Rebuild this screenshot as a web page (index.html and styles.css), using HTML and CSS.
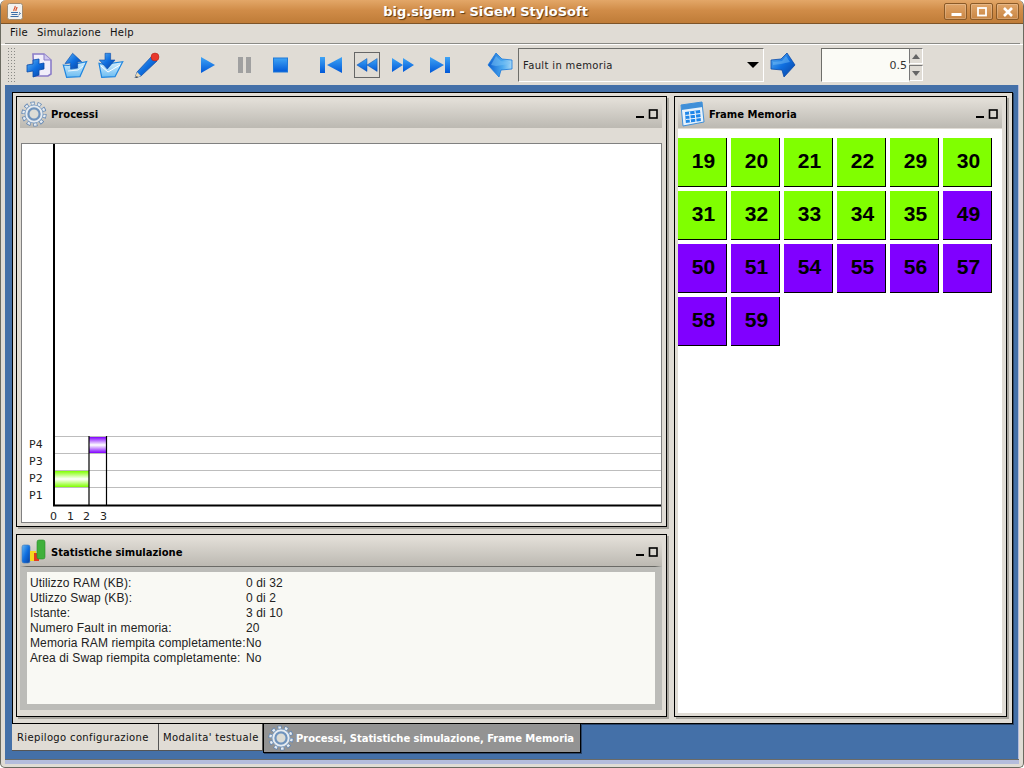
FILE: index.html
```html
<!DOCTYPE html>
<html>
<head>
  <title>big.sigem - SiGeM StyloSoft</title>
  <link rel="stylesheet" href="styles.css">
</head>
<body>
  <!-- shared gradients and icons -->
  <svg class="defs" width="0" height="0">
    <defs>
      <linearGradient id="blu" x1="0" y1="0" x2="0" y2="1">
        <stop offset="0" stop-color="#3fa4f5"/>
        <stop offset="1" stop-color="#0058d8"/>
      </linearGradient>
      <linearGradient id="bluDark" x1="0" y1="0" x2="1" y2="1">
        <stop offset="0" stop-color="#67b7f0"/>
        <stop offset="0.5" stop-color="#0f6fe0"/>
        <stop offset="1" stop-color="#0a3f9c"/>
      </linearGradient>
      <linearGradient id="bluBack" x1="0" y1="0" x2="1" y2="0">
        <stop offset="0" stop-color="#0d5fd0"/>
        <stop offset="0.6" stop-color="#4aa8ee"/>
        <stop offset="1" stop-color="#a8d8f6"/>
      </linearGradient>
      <linearGradient id="bluPale" x1="0" y1="0" x2="0" y2="1">
        <stop offset="0" stop-color="#d6effc"/>
        <stop offset="1" stop-color="#6bbcf2"/>
      </linearGradient>
      <linearGradient id="greenBar" x1="0" y1="0" x2="0" y2="1">
        <stop offset="0" stop-color="#80ff00"/>
        <stop offset="0.5" stop-color="#ffffff"/>
        <stop offset="1" stop-color="#80ff00"/>
      </linearGradient>
      <linearGradient id="purpleBar" x1="0" y1="0" x2="0" y2="1">
        <stop offset="0" stop-color="#8000ff"/>
        <stop offset="0.5" stop-color="#ffffff"/>
        <stop offset="1" stop-color="#8000ff"/>
      </linearGradient>
      <symbol id="gear" viewBox="0 0 26 26">
        <circle cx="13" cy="13" r="10.6" fill="none" stroke="#6488b4" stroke-width="4" stroke-dasharray="3.6 2.4" pathLength="60"/>
        <circle cx="13" cy="13" r="10.6" fill="none" stroke="#e6ebf0" stroke-width="2.4" stroke-dasharray="2.4 3.6" stroke-dashoffset="-0.6" pathLength="60"/>
        <circle cx="13" cy="13" r="9" fill="#e6ebf0" stroke="#7f9fc4" stroke-width="0.8"/>
        <circle cx="13" cy="13" r="5.6" fill="#dcdcd6" stroke="#6f93bd" stroke-width="2.2"/>
      </symbol>
      <symbol id="winMin" viewBox="0 0 24 10">
        <rect x="2" y="7" width="8" height="2" fill="#000"/>
        <rect x="15.500" y="1" width="7.500" height="8" fill="#d8d5ce" stroke="#000" stroke-width="1.600"/>
      </symbol>
    </defs>
  </svg>

  <div class="window">
    <div class="titlebar">
      <svg class="java-icon" width="16" height="17" viewBox="0 0 16 17">
        <rect x="0.5" y="0.5" width="15" height="16" rx="2" fill="#f2f2f0" stroke="#a08a70"/>
        <path d="M8 3c1 2-2 3-1 5M10 4c0 2-1.500 2-1 4" fill="none" stroke="#d8502a" stroke-width="1.200"/>
        <path d="M4 9.500h7M4.500 11.500h6M3.500 13.500h8M12 9.500l1.500 1-2 1.500" fill="none" stroke="#3c6ea8" stroke-width="1"/>
      </svg>
      <div class="title-text">big.sigem - SiGeM StyloSoft</div>
      <div class="win-buttons">
        <div class="win-btn">
          <svg width="14" height="12" viewBox="0 0 14 12"><rect x="2.500" y="7" width="10" height="3" fill="#fff"/></svg>
        </div>
        <div class="win-btn">
          <svg width="14" height="12" viewBox="0 0 14 12"><rect x="3" y="2" width="8" height="7.500" fill="none" stroke="#fff" stroke-width="1.800"/></svg>
        </div>
        <div class="win-btn">
          <svg width="14" height="12" viewBox="0 0 14 12"><path d="M3 2l8 8M11 2l-8 8" stroke="#fff" stroke-width="2.600"/></svg>
        </div>
      </div>
    </div>

    <div class="menubar">
      <span class="menu-item">File</span>
      <span class="menu-item">Simulazione</span>
      <span class="menu-item">Help</span>
    </div>

    <div class="toolbar">
      <div class="gripper"></div>

      <div class="tool-group first-group">
        <svg class="tool" viewBox="0 0 26 26">
          <path d="M7 2h11l7 6v14l-3 2H8z" fill="#f1eefa" stroke="#8a7cc8" stroke-width="1.600"/>
          <path d="M18 2v6h7" fill="#cfc8ee" stroke="#8a7cc8"/>
          <path d="M7 8l6-1v5l5-1v6l-5 1v5l-6 2v-6l-6 1v-7l6-1z" fill="url(#bluDark)" stroke="#0a4aa8" stroke-width="0.800"/>
        </svg>
        <svg class="tool" viewBox="0 0 26 26">
          <path d="M1.300 13l5 .5 18.300-3.900-6.600 15L4.600 25.300z" fill="url(#bluPale)" stroke="#1f86e0" stroke-width="1.200"/>
          <path d="M10.600 1.300l9 8.300-4 .5v6l-7 1v-6l-5.600.5z" fill="url(#bluDark)" stroke="#0a4aa8" stroke-width="0.600"/>
          <path d="M6 19l10-1 5-4" fill="none" stroke="#fff" stroke-width="0.800"/>
        </svg>
        <svg class="tool" viewBox="0 0 26 26">
          <path d="M1 11.300l5 1 18.700-2.600-7.700 15-13.300.6z" fill="url(#bluPale)" stroke="#1f86e0" stroke-width="1.200"/>
          <path d="M3 14l7 6 12-7" fill="none" stroke="#fff"/>
          <path d="M7 1.300h5.600V8H17l-7.700 9-8-9H7z" fill="url(#bluDark)" stroke="#0a4aa8" stroke-width="0.600"/>
        </svg>
        <svg class="tool" viewBox="0 0 26 26">
          <path d="M18 4l5 5L7 24l-6 2 2-6z" fill="url(#bluDark)" stroke="#0a4aa8" stroke-width="0.700"/>
          <path d="M3 20l4 4-6 2z" fill="#ecd9b4"/>
          <path d="M1 26l2-2 .8 1.200z" fill="#222"/>
          <circle cx="21" cy="5" r="4" fill="#e8382c" stroke="#a82018" stroke-width="0.500"/>
        </svg>
      </div>

      <div class="tool-group play-group">
        <svg class="tool" viewBox="0 0 26 26"><path d="M6 5l14 8-14 8z" fill="url(#blu)"/></svg>
        <svg class="tool" viewBox="0 0 26 26"><path d="M7 5h5v16H7zM15 5h5v16h-5z" fill="#a0a0a0"/></svg>
        <svg class="tool" viewBox="0 0 26 26"><rect x="6.500" y="6" width="14" height="14" fill="url(#blu)" stroke="#1f78d8"/></svg>
      </div>

      <div class="tool-group nav-group">
        <svg class="tool" viewBox="0 0 26 26"><path d="M2 5h5v16H2zM24 5v16L9 13z" fill="url(#blu)"/></svg>
        <svg class="tool tool-on" viewBox="0 0 26 26"><path d="M13 6v7l11-7v14L13 13v7L2 13z" fill="url(#blu)" stroke="#0a4aa8" stroke-width="0.500"/></svg>
        <svg class="tool" viewBox="0 0 26 26"><path d="M13 6v7L2 6v14l11-7v7l11-7z" fill="url(#blu)"/></svg>
        <svg class="tool" viewBox="0 0 26 26"><path d="M24 5h-5v16h5zM4 5v16l14-8z" fill="url(#blu)"/></svg>
      </div>

      <svg class="tool back-arrow" viewBox="0 0 26 26">
        <path d="M1 13L9 1l6 6 10 1v9l-11 1-2 7z" fill="url(#bluBack)" stroke="#1878dc" stroke-width="0.800"/>
        <path d="M4 13L9 4l5 5 9 1v2l-14 2z" fill="#7cc4f6" opacity="0.500"/>
      </svg>

      <div class="combo">
        <span class="combo-text">Fault in memoria</span>
        <span class="combo-arrow"></span>
      </div>

      <svg class="tool next-arrow" viewBox="0 0 26 26">
        <path d="M25 13L17 1l-6 6-10 1v9l11 1 2 7z" fill="url(#bluDark)" stroke="#0a4aa8" stroke-width="0.800"/>
        <path d="M3 10l9-1 4-5 4 6-9 2-8 1z" fill="#7cc4f6" opacity="0.450"/>
      </svg>

      <div class="spinner">
        <div class="spinner-field">0.5</div>
        <div class="spinner-btns">
          <div class="spin-btn"><span class="spin-up"></span></div>
          <div class="spin-btn"><span class="spin-down"></span></div>
        </div>
      </div>
    </div>

    <div class="desktop">
      <div class="tab-content">
        <div class="left-col">
          <div class="frame frame-process">
            <div class="frame-title">
              <svg class="frame-icon" width="26" height="26"><use href="#gear"/></svg>
              <span class="frame-label">Processi</span>
              <svg class="frame-ctrl" width="24" height="10"><use href="#winMin"/></svg>
            </div>
            <div class="chart-wrap">
              <svg class="chart" width="639" height="378" viewBox="0 0 639 378">
                <g class="grid">
                  <path d="M32 292.500H639M32 309.500H639M32 326.500H639M32 343.500H639"/>
                </g>
                <rect x="32" y="327" width="35" height="16" fill="url(#greenBar)"/>
                <rect x="67" y="293" width="18" height="16" fill="url(#purpleBar)"/>
                <path d="M67 292v70M84.500 292v70" stroke="#000" stroke-width="1.200" fill="none"/>
                <path d="M32 0v362M31 361.500H639" stroke="#000" stroke-width="2" fill="none"/>
                <g class="chart-text">
                  <text x="7" y="304">P4</text>
                  <text x="7" y="321">P3</text>
                  <text x="7" y="338">P2</text>
                  <text x="7" y="355">P1</text>
                  <text x="28" y="376">0</text>
                  <text x="45" y="376">1</text>
                  <text x="61" y="376">2</text>
                  <text x="78" y="376">3</text>
                </g>
              </svg>
            </div>
          </div>

          <div class="frame frame-stats">
            <div class="frame-title">
              <svg class="frame-icon" width="26" height="26" viewBox="0 0 26 26">
                <rect x="1" y="6" width="8" height="18" rx="2" fill="url(#bluDark)" stroke="#3d78c0" stroke-width="0.600"/>
                <rect x="9" y="12" width="6" height="10" fill="#f5d820"/>
                <rect x="13" y="14" width="5" height="8" fill="#e23a20"/>
                <rect x="16" y="1" width="8" height="19" rx="2" fill="#3fb03a" stroke="#2a8a2a" stroke-width="0.600"/>
              </svg>
              <span class="frame-label">Statistiche simulazione</span>
              <svg class="frame-ctrl" width="24" height="10"><use href="#winMin"/></svg>
            </div>
            <div class="stats-box">
              <div class="stats-grid">
                <span>Utilizzo RAM (KB):</span><span>0 di 32</span>
                <span>Utlizzo Swap (KB):</span><span>0 di 2</span>
                <span>Istante:</span><span>3 di 10</span>
                <span>Numero Fault in memoria:</span><span>20</span>
                <span>Memoria RAM riempita completamente:</span><span>No</span>
                <span>Area di Swap riempita completamente:</span><span>No</span>
              </div>
            </div>
          </div>
        </div>

        <div class="frame frame-memory">
          <div class="frame-title">
            <svg class="frame-icon" width="26" height="26" viewBox="0 0 26 26">
              <path d="M2 4l21-3 2 20-21 4z" fill="#e8f2fb" stroke="#3f8fd8"/>
              <path d="M2 4l21-3 .6 5-21 3z" fill="#3f8fd8"/>
              <path d="M6 11l15-2 .9 11-15 2z" fill="#1f86e8"/>
              <path d="M10.500 10.500l1 11M16 10l1 11M6.500 14.500l15-2M7 18.500l15-2" stroke="#e8f2fb" stroke-width="1.200" fill="none"/>
            </svg>
            <span class="frame-label">Frame Memoria</span>
            <svg class="frame-ctrl" width="24" height="10"><use href="#winMin"/></svg>
          </div>
          <div class="cells">
            <div class="cell green">19</div>
            <div class="cell green">20</div>
            <div class="cell green">21</div>
            <div class="cell green">22</div>
            <div class="cell green">29</div>
            <div class="cell green">30</div>
            <div class="cell green">31</div>
            <div class="cell green">32</div>
            <div class="cell green">33</div>
            <div class="cell green">34</div>
            <div class="cell green">35</div>
            <div class="cell purple">49</div>
            <div class="cell purple">50</div>
            <div class="cell purple">51</div>
            <div class="cell purple">54</div>
            <div class="cell purple">55</div>
            <div class="cell purple">56</div>
            <div class="cell purple">57</div>
            <div class="cell purple">58</div>
            <div class="cell purple">59</div>
          </div>
        </div>
      </div>

      <div class="tabs">
        <div class="tab tab-first">Riepilogo configurazione</div>
        <div class="tab tab-second">Modalita' testuale</div>
        <div class="tab tab-active">
          <svg width="26" height="26"><use href="#gear"/></svg>
          <span>Processi, Statistiche simulazione, Frame Memoria</span>
        </div>
      </div>
    </div>
    <div class="desktop-foot"></div>
  </div>
</body>
</html>
```

FILE: styles.css
```css
html, body {
  margin: 0;
  padding: 0;
}

body {
  font-family: "DejaVu Sans", sans-serif;
  background-color: #ffffff;
}

.defs {
  position: absolute;
}

.window {
  width: 1024px;
  height: 768px;
  box-sizing: border-box;
  background-color: #e0dcd5;
  border: 1px solid #6a6a60;
  border-top: none;
  border-radius: 6px 6px 5px 5px;
  display: flex;
  flex-direction: column;
  overflow: hidden;
}

/* Title bar */
.titlebar {
  height: 24px;
  flex: none;
  box-sizing: border-box;
  display: flex;
  align-items: center;
  background: linear-gradient(#e3a768, #d08c48 45%, #bf7c38);
  border-bottom: 1px solid #7d5428;
  padding: 0 4px 0 6px;
}

.title-text {
  flex: 1;
  text-align: center;
  color: #ffffff;
  font-weight: bold;
  font-size: 13px;
  text-shadow: 1px 1px 1px #5c3a14;
  padding-left: 4px;
}

.win-buttons {
  display: flex;
  gap: 3px;
}

.win-btn {
  width: 23px;
  height: 17px;
  box-sizing: border-box;
  border: 1px solid #8a5a28;
  border-radius: 2px;
  background: linear-gradient(#e0a569, #c98644);
  box-shadow: inset 0 0 0 1px rgba(255, 255, 255, 0.2);
  display: flex;
  align-items: center;
  justify-content: center;
}

/* Menu */
.menubar {
  height: 20px;
  flex: none;
  box-sizing: border-box;
  margin: 0 3px 0 4px;
  border-bottom: 1px solid #8b8b86;
  display: flex;
  align-items: center;
  gap: 9px;
  padding: 0 0 2px 5px;
  font-size: 10px;
  letter-spacing: 0.3px;
  color: #111111;
}

/* Toolbar */
.toolbar {
  height: 41px;
  flex: none;
  box-sizing: border-box;
  border-top: 1px solid #ffffff;
  display: flex;
  align-items: center;
  padding-left: 6px;
}

.gripper {
  width: 10px;
  height: 36px;
  background-image: radial-gradient(#8a8a86 0.7px, transparent 1px);
  background-size: 3px 3px;
}

.tool-group {
  display: flex;
  gap: 10px;
}

.first-group {
  margin-left: 9px;
}

.play-group {
  margin-left: 35px;
}

.nav-group {
  margin-left: 25px;
}

.tool {
  width: 26px;
  height: 26px;
  flex: none;
}

.tool-on {
  box-sizing: border-box;
  border: 1px solid #666666;
}

.back-arrow {
  margin-left: 35px;
}

.next-arrow {
  margin-left: 6px;
}

.combo {
  width: 246px;
  height: 34px;
  margin-left: 5px;
  box-sizing: border-box;
  border: 1px solid #6e6e6a;
  border-right-color: #ffffff;
  border-bottom-color: #ffffff;
  display: flex;
  align-items: center;
  justify-content: space-between;
  padding: 0 4px;
  font-size: 10px;
  letter-spacing: 0.35px;
  color: #222222;
}

.combo-arrow {
  width: 0;
  height: 0;
  border-left: 6px solid transparent;
  border-right: 6px solid transparent;
  border-top: 6px solid #000000;
}

.spinner {
  margin-left: 25px;
  display: flex;
  height: 34px;
}

.spinner-field {
  width: 88px;
  box-sizing: border-box;
  background-color: #fbfbf6;
  border: 1px solid #6e6e6a;
  border-right: none;
  border-bottom-color: #ffffff;
  text-align: right;
  line-height: 33px;
  padding-right: 2px;
  font-size: 11px;
  color: #333333;
}

.spinner-btns {
  display: flex;
  flex-direction: column;
  gap: 1px;
}

.spin-btn {
  width: 14px;
  height: 16px;
  box-sizing: border-box;
  border: 1px solid #777777;
  border-right-color: #ffffff;
  border-bottom-color: #ffffff;
  display: flex;
  align-items: center;
  justify-content: center;
}

.spin-up {
  border-left: 4px solid transparent;
  border-right: 4px solid transparent;
  border-bottom: 5px solid #666666;
}

.spin-down {
  border-left: 4px solid transparent;
  border-right: 4px solid transparent;
  border-top: 5px solid #666666;
}

/* Desktop area */
.desktop {
  height: 674px;
  flex: none;
  margin: 0 4px 0 4px;
  box-sizing: border-box;
  background-color: #4470a8;
  border-right: 1px solid #b4bcdc;
  padding: 7px 5px 0 7px;
  display: flex;
  flex-direction: column;
}

.desktop-foot {
  height: 4px;
  flex: none;
  margin: 0 4px 0 4px;
  background-color: #b4bcdc;
  border-top: 1px solid #6a6a66;
}

.tab-content {
  height: 632px;
  flex: none;
  box-sizing: border-box;
  border: 1px solid #000000;
  background-color: #e0dcd5;
  padding: 3px 3px 6px;
  display: flex;
  gap: 7px;
  box-shadow: 1px 1px 0 #2a4468;
}

.left-col {
  width: 651px;
  flex: none;
  display: flex;
  flex-direction: column;
  gap: 7px;
}

/* Internal frames */
.frame {
  box-sizing: border-box;
  border: 1px solid #000000;
  padding: 2px 4px 4px 3px;
  background-color: #e0dcd5;
  box-shadow: 2px 2px 0 #a9a69f;
  display: flex;
  flex-direction: column;
}

.frame-process {
  height: 431px;
}

.frame-stats {
  flex: 1;
}

.frame-memory {
  width: 333px;
  height: 621px;
  padding-bottom: 3px;
}

.frame-title {
  height: 29px;
  flex: none;
  box-sizing: border-box;
  display: flex;
  align-items: center;
  gap: 4px;
  padding: 1px 4px 0 1px;
  background: linear-gradient(#e3dfd8, #bcb9b2);
}

.frame-label {
  flex: 1;
  font-weight: bold;
  font-size: 10px;
  color: #000000;
}

.frame-icon {
  flex: none;
}

.frame-ctrl {
  flex: none;
}

/* Chart */
.chart-wrap {
  margin: 15px 0 0 1px;
  width: 639px;
  height: 378px;
  border: 1px solid #808080;
  background-color: #ffffff;
}

.chart {
  display: block;
  overflow: visible;
}

.grid path {
  stroke: #bdbdbd;
  stroke-width: 1;
  fill: none;
}

.chart-text text {
  font-family: "DejaVu Sans", sans-serif;
  font-size: 11px;
  fill: #222222;
}

/* Statistics */
.stats-box {
  flex: 1;
  box-sizing: border-box;
  margin-bottom: 2px;
  border-top: 1px solid #6a6a66;
  border-left: 7px solid #bcbcb8;
  border-right: 7px solid #bcbcb8;
  border-bottom: 6px solid #bcbcb8;
  background-color: #f9f9f4;
  box-shadow: inset 0 5px 0 #bcbcb8;
  padding: 9px 0 0 3px;
}

.stats-grid {
  display: grid;
  grid-template-columns: 216px 1fr;
  font-family: "Liberation Sans", sans-serif;
  font-size: 12px;
  letter-spacing: 0.12px;
  line-height: 15px;
  color: #222222;
}

/* Memory frames */
.cells {
  flex: 1;
  margin: 1px 0 0 0;
  background-color: #ffffff;
  padding: 9px 0 0 0;
  display: grid;
  grid-template-columns: repeat(6, 49px);
  grid-auto-rows: 49px;
  gap: 4px;
  align-content: start;
}

.cell {
  box-sizing: border-box;
  border-right: 1px solid #000000;
  border-bottom: 1px solid #000000;
  padding: 0 0 2px 3px;
  display: flex;
  align-items: center;
  justify-content: center;
  font-family: "Liberation Sans", sans-serif;
  font-weight: bold;
  font-size: 21px;
  color: #000000;
}

.green {
  background-color: #80ff00;
}

.purple {
  background-color: #8000ff;
}

/* Tabs */
.tabs {
  display: flex;
  align-items: flex-start;
  font-size: 10px;
  letter-spacing: 0.35px;
  color: #111111;
}

.tab {
  height: 27px;
  box-sizing: border-box;
  background-color: #e0dcd5;
  display: flex;
  align-items: center;
  border-right: 1px solid #555555;
  border-bottom: 1px solid #555555;
}

.tab-first {
  width: 147px;
  padding-left: 5px;
}

.tab-second {
  width: 104px;
  padding-left: 4px;
}

.tab-active {
  width: 318px;
  height: 29px;
  padding-left: 4px;
  gap: 2px;
  background-color: #939393;
  border: 1px solid #000000;
  border-top: none;
  color: #ffffff;
  font-weight: bold;
  letter-spacing: -0.06px;
  white-space: nowrap;
  box-shadow: 1px 1px 0 #2a4468;
}
```
